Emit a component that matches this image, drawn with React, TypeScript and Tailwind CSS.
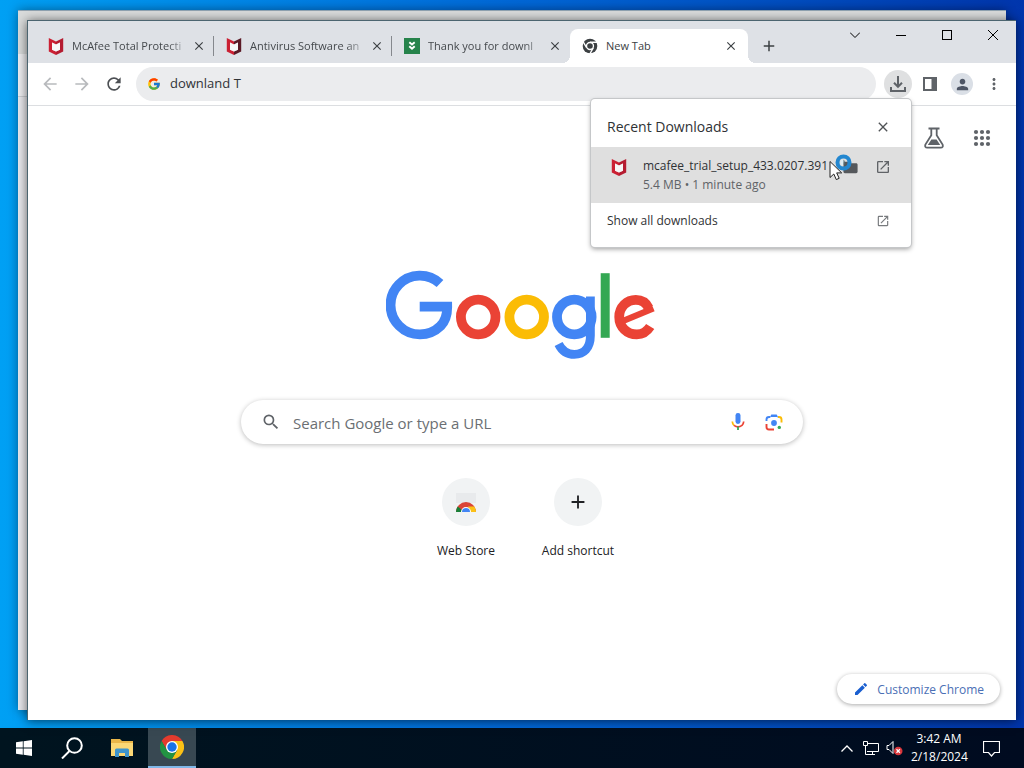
import React from "react";
import {
  MdAdd,
  MdArrowBack,
  MdArrowForward,
  MdClose,
  MdEdit,
  MdFolder,
  MdMoreVert,
  MdOpenInNew,
  MdPerson,
  MdRefresh,
  MdSearch,
} from "react-icons/md";
import { FcGoogle } from "react-icons/fc";

function McAfeeIcon({ dark = false }: { dark?: boolean }) {
  return (
    <svg viewBox="0 0 16 17" className="h-[17px] w-4 shrink-0" aria-hidden="true">
      <path d="M.8 0 8 3.400V6.400L4 4.500v7.200l4 1.900V17l-7.200-3.500z" fill="#cb2033" />
      <path d="M15.200 0 8 3.400V6.400l4-1.900v7.200l-4 1.900V17l7.200-3.500z" fill={dark ? "#5b1a26" : "#b51c31"} />
      <path d="M4 4.500l4 1.900 4-1.900v7.200l-4 1.900-4-1.900z" fill="#fff" fillOpacity="0.75" />
    </svg>
  );
}

function GreenChevronIcon() {
  return (
    <svg viewBox="0 0 16 16" className="size-4 shrink-0" aria-hidden="true">
      <rect width="16" height="16" fill="#26834b" />
      <path d="M5.300 4.200 8 6.500l2.700-2.300M5.300 8.200 8 10.800l2.700-2.600" fill="none" stroke="#fff" strokeWidth="1.900" />
    </svg>
  );
}

function ChromeGrayIcon() {
  return (
    <svg viewBox="0 0 24 24" className="size-4 shrink-0" aria-hidden="true">
      <circle cx="12" cy="12" r="11" fill="#3c4043" />
      <path d="M12 6.400h10.500M7.100 14.900 1.800 5.700M16.900 14.900l-5.300 9.200" stroke="#fff" strokeWidth="2" />
      <circle cx="12" cy="12" r="5.200" fill="#3c4043" stroke="#fff" strokeWidth="2" />
    </svg>
  );
}

function ChromeIcon() {
  return (
    <svg viewBox="0 0 24 24" className="size-6" aria-hidden="true">
      <path d="M1.600 6A12 12 0 0 1 22.400 6H12L6.800 15z" fill="#e33b2e" />
      <path d="M22.400 6A12 12 0 0 1 12 24l5.200-9L12 6z" fill="#fbc116" />
      <path d="M12 24A12 12 0 0 1 1.600 6l5.200 9h10.400z" fill="#229342" />
      <circle cx="12" cy="12" r="6" fill="#fff" />
      <circle cx="12" cy="12" r="4.700" fill="#1a73e8" />
    </svg>
  );
}

function GoogleLogo() {
  return (
    <svg viewBox="387 270 270 90" className="h-[90px] w-[270px]" role="img" aria-label="Google" fill="none">
      <path
        d="M441 283.500A29.400 29.400 0 1 0 441.500 326C446.500 320.800 448.300 314 448.200 306.600H420.700"
        stroke="#4285f4"
        strokeWidth="9.800"
      />
      <circle cx="479.200" cy="317" r="17.300" stroke="#ea4335" strokeWidth="9.800" />
      <circle cx="527.700" cy="317" r="17.300" stroke="#fbbc05" strokeWidth="9.800" />
      <circle cx="575.300" cy="317" r="17.300" stroke="#4285f4" strokeWidth="9.800" />
      <path
        d="M591.400 296.400V335.500C591.400 348.500 584.500 354.400 575.300 354.400C568 354.400 562.600 350.200 559.600 344"
        stroke="#4285f4"
        strokeWidth="8.800"
      />
      <path d="M606.200 273.200V337.800" stroke="#34a853" strokeWidth="9" />
      <path
        d="M651.200 326.500C648 331.600 643.400 334.400 637.800 334.400C628 334.400 620.200 327 620.200 317C620.200 307 627.800 299.800 636.800 299.800C643 299.800 647.400 303.200 649.600 307.800"
        stroke="#ea4335"
        strokeWidth="9.700"
      />
      <path d="M623 321.400 654.400 308.400" stroke="#ea4335" strokeWidth="6.400" />
    </svg>
  );
}

function DownloadIcon() {
  return (
    <svg viewBox="0 0 18 18" className="size-[18px]" fill="none" stroke="#5f6368" strokeWidth="2" aria-hidden="true">
      <path d="M9 1v10.500M5 7.800l4 4 4-4M2 12v4h14v-4" />
    </svg>
  );
}

function SidePanelIcon() {
  return (
    <svg viewBox="0 0 14 14" className="size-3.5" aria-hidden="true">
      <path d="M0 0h14v14H0zM2 2v10h6.500V2z" fill="#5f6368" fillRule="evenodd" />
    </svg>
  );
}

function FlaskIcon() {
  return (
    <svg viewBox="0 0 20 22" className="h-[22px] w-5" fill="none" stroke="#5f6368" strokeWidth="1.800" aria-hidden="true">
      <path d="M4.500 1.500h11M7.300 1.500v6.800L1.400 17.600Q.5 20.600 3.200 20.600h13.600q2.700 0 1.800-3L12.700 8.300V1.500" />
      <path d="M7.400 12.500h5.200l3.600 5.500H3.800z" fill="#5f6368" stroke="none" />
    </svg>
  );
}

function AppsIcon() {
  return (
    <svg viewBox="0 0 24 24" className="size-6" fill="#5f6368" aria-hidden="true">
      {[6, 12, 18].map((cy) =>
        [6, 12, 18].map((cx) => <circle key={cx + "-" + cy} cx={cx} cy={cy} r="2.100" />),
      )}
    </svg>
  );
}

function MicIcon() {
  return (
    <svg viewBox="0 0 14 18" className="h-[18px] w-3.5" fill="none" aria-hidden="true">
      <rect x="4.500" y="0" width="5" height="11" rx="2.400" fill="#4285f4" />
      <path d="M1.300 8.500q.1 2.400 1.700 3.900" stroke="#fbbc05" strokeWidth="1.700" />
      <path d="M3 12.400q4 3 8 0 1.600-1.500 1.700-3.900" stroke="#ea4335" strokeWidth="1.700" />
      <path d="M7 13.500V17" stroke="#34a853" strokeWidth="1.800" />
    </svg>
  );
}

function LensIcon() {
  return (
    <svg viewBox="0 0 18 18" className="size-[18px]" fill="none" strokeWidth="1.900" aria-hidden="true">
      <path d="M1.500 8V6.500q0-2.500 2.500-2.500h1" stroke="#4285f4" />
      <path d="M4.500 4.900 6.300 1.500h5.400l1.800 3.400-1.500-.9H6z" fill="#4285f4" />
      <path d="M13 4h1q2.500 0 2.500 2.500V9.500" stroke="#fbbc05" />
      <path d="M1.500 11V14q0 2.500 2.500 2.500h5" stroke="#ea4335" />
      <circle cx="9" cy="10" r="2.900" fill="#4285f4" />
      <circle cx="14.300" cy="14.400" r="1.700" fill="#34a853" />
    </svg>
  );
}

function WebStoreIcon() {
  return (
    <svg viewBox="0 0 24 24" className="size-6" aria-hidden="true">
      <path d="M2 3h20v10H2z" fill="#e8eaec" />
      <path d="M2 22a10 10 0 0 1 20 0z" fill="#db4437" />
      <path d="M2 22a10 10 0 0 1 1.700-5.500L8 20v2z" fill="#188038" />
      <path d="M22 22a10 10 0 0 0-1.700-5.500H14l2 5.500z" fill="#fbc116" />
      <path d="M7 22a5 5 0 0 1 10 0z" fill="#fff" />
      <path d="M8 22a4 4 0 0 1 8 0z" fill="#4285f4" />
    </svg>
  );
}

function PointerBusy() {
  return (
    <svg viewBox="0 0 26 30" className="absolute top-[54px] left-[237px] h-[30px] w-[26px]" aria-hidden="true">
      <circle cx="15.500" cy="9.500" r="6" fill="none" stroke="#2387d0" strokeWidth="4" />
      <path d="M12.500 9.500a3 3 0 0 1 3-3v6a3 3 0 0 1-3-3z" fill="#dcebf3" />
      <path d="M15.500 6.500a4 4 0 0 1 0 6z" fill="#55707a" />
      <path d="M2 8.500v16l3.800-3.500 2.500 5.600 2.900-1.300-2.500-5.400h5z" fill="#fff" stroke="#222" strokeWidth="1" />
    </svg>
  );
}

const tabs = [
  { title: "McAfee Total Protecti", icon: <McAfeeIcon /> },
  { title: "Antivirus Software an", icon: <McAfeeIcon dark /> },
  { title: "Thank you for downl", icon: <GreenChevronIcon /> },
];

function TitleBar() {
  return (
    <header className="flex h-[42px] items-end bg-[#dee1e6] pl-2">
      <div className="flex min-w-0" role="tablist">
        {tabs.map((tab, i) => (
          <div
            key={tab.title}
            role="tab"
            aria-selected="false"
            className="flex h-[34px] w-[178px] items-center pl-3"
          >
            {tab.icon}
            <span className="ml-2 w-[120px] text-[11px] whitespace-nowrap text-[#45494d] [mask-image:linear-gradient(to_right,black_80%,#0003_94%)]">
              {tab.title}
            </span>
            <button aria-label={"Close " + tab.title} className="text-[#3c4043]">
              <MdClose size={14} />
            </button>
            {i < 2 && <span className="ml-auto h-5 w-px bg-[#85888d]" />}
          </div>
        ))}
        <div
          role="tab"
          aria-selected="true"
          className="relative flex h-[34px] w-[178px] items-center rounded-t-lg bg-white pl-3 before:absolute before:bottom-0 before:-left-2 before:size-2 before:bg-[radial-gradient(circle_at_0_0,transparent_8px,white_8px)] after:absolute after:-right-2 after:bottom-0 after:size-2 after:bg-[radial-gradient(circle_at_100%_0,transparent_8px,white_8px)]"
        >
          <ChromeGrayIcon />
          <span className="ml-2 w-[118px] text-[11px] text-[#3c4043]">New Tab</span>
          <button aria-label="Close New Tab" className="text-[#3c4043]">
            <MdClose size={14} />
          </button>
        </div>
      </div>
      <button aria-label="New tab" className="mb-2 ml-3 text-[#3c4043]">
        <MdAdd size={18} />
      </button>
      <div className="ml-auto flex self-start text-black">
        <button aria-label="Search tabs" className="flex h-7 w-[46px] items-center justify-center">
          <svg viewBox="0 0 10 6" className="h-1.5 w-2.5" fill="none" stroke="currentColor">
            <path d="m0 .5 5 5 5-5" />
          </svg>
        </button>
        <button aria-label="Minimize" className="flex h-7 w-[46px] items-center justify-center">
          <span className="h-px w-2.5 bg-black" />
        </button>
        <button aria-label="Maximize" className="flex h-7 w-[46px] items-center justify-center">
          <span className="size-2.5 border border-black" />
        </button>
        <button aria-label="Close window" className="flex h-7 w-[46px] items-center justify-center">
          <svg viewBox="0 0 10 10" className="size-2.5" fill="none" stroke="currentColor">
            <path d="m0 0 10 10M10 0 0 10" />
          </svg>
        </button>
      </div>
    </header>
  );
}

function Toolbar() {
  return (
    <div className="flex h-[43px] items-center border-b border-[#dcdee1] pr-[13px] pl-3 text-[#5f6368]">
      <button aria-label="Back" className="text-[#b8babd]">
        <MdArrowBack size={20} />
      </button>
      <button aria-label="Forward" className="ml-3 text-[#b8babd]">
        <MdArrowForward size={20} />
      </button>
      <button aria-label="Reload" className="ml-3 text-[#4d5054]">
        <MdRefresh size={20} />
      </button>
      <div className="ml-3 flex h-[34px] flex-1 items-center rounded-full bg-[#ebecee] pl-[11px]">
        <FcGoogle size={14} />
        <input
          aria-label="Address"
          defaultValue="downland T"
          className="ml-[9px] flex-1 bg-transparent text-[13px] text-[#303337] outline-none"
        />
      </div>
      <div className="ml-2 flex items-center">
        <button aria-label="Downloads" className="flex size-7 items-center justify-center rounded-full bg-[#dfe0e1]">
          <DownloadIcon />
        </button>
        <button aria-label="Side panel" className="ml-[11px]">
          <SidePanelIcon />
        </button>
        <button
          aria-label="Profile"
          className="ml-3.5 flex size-[22px] items-center justify-center rounded-full bg-[#dadfe6]"
        >
          <MdPerson size={17} color="#4d5565" />
        </button>
        <button aria-label="Menu" className="ml-3">
          <MdMoreVert size={18} />
        </button>
      </div>
    </div>
  );
}

function DownloadBubble() {
  return (
    <section
      aria-label="Recent Downloads"
      className="absolute top-[78px] right-[105px] h-[148px] w-80 rounded-[4px] bg-white text-[#2f3235] shadow-[0_0_0_1px_#c5c7c9,0_2px_5px_#0006]"
    >
      <div className="flex h-12 items-center justify-between pt-2 pr-5 pl-4">
        <h2 className="text-sm">Recent Downloads</h2>
        <button aria-label="Close downloads" className="text-[#505356]">
          <MdClose size={16} />
        </button>
      </div>
      <div className="flex h-14 items-center bg-[#dfdfdf] pr-5 pl-5">
        <div className="-mt-4">
          <McAfeeIcon />
        </div>
        <div className="ml-4 min-w-0 flex-1">
          <p className="h-[19px] text-xs leading-[18px] whitespace-nowrap">mcafee_trial_setup_433.0207.391</p>
          <p className="text-xs leading-[18px] text-[#606367]">5.4 MB • 1 minute ago</p>
        </div>
        <button aria-label="Show in folder" className="-mt-4 text-[#55585c]">
          <MdFolder size={17} />
        </button>
        <button aria-label="Open file" className="-mt-4 ml-4 text-[#606367]">
          <MdOpenInNew size={16} />
        </button>
      </div>
      <a href="#downloads" className="flex h-9 items-center justify-between pr-[21px] pl-4 text-xs">
        Show all downloads
        <MdOpenInNew size={14} color="#777a7d" />
      </a>
      <PointerBusy />
    </section>
  );
}

function NewTabPage() {
  return (
    <main className="relative flex flex-1 flex-col items-center bg-white">
      <div className="flex h-16 w-full items-center justify-end gap-[26px] pr-[22px] text-[#5f6368]">
        <button aria-label="Labs">
          <FlaskIcon />
        </button>
        <button aria-label="Google apps">
          <AppsIcon />
        </button>
      </div>
      <div className="mt-[100px] pr-0.5">
        <GoogleLogo />
      </div>
      <div className="mt-10 flex h-11 w-[562px] max-w-full items-center rounded-full bg-white px-5 shadow-[0_1px_5px_#0004]">
        <MdSearch size={20} color="#5f6368" />
        <input
          aria-label="Search Google or type a URL"
          placeholder="Search Google or type a URL"
          className="ml-3 min-w-0 flex-1 bg-transparent pt-0.5 text-[15px] text-[#303337] outline-none placeholder:text-[#6b6f73]"
        />
        <button aria-label="Search by voice">
          <MicIcon />
        </button>
        <button aria-label="Search by image" className="ml-5">
          <LensIcon />
        </button>
      </div>
      <div className="mt-[34px] flex text-[#202124]">
        <a href="#store" className="flex w-28 flex-col items-center">
          <span className="flex size-12 items-center justify-center rounded-full bg-[#f1f3f4]">
            <WebStoreIcon />
          </span>
          <span className="mt-[17px] leading-4">Web Store</span>
        </a>
        <button className="flex w-28 flex-col items-center">
          <span className="flex size-12 items-center justify-center rounded-full bg-[#f1f3f4]">
            <MdAdd size={22} />
          </span>
          <span className="mt-[17px] leading-4">Add shortcut</span>
        </button>
      </div>
      <button className="absolute right-4 bottom-4 flex h-[30px] items-center gap-2 rounded-full bg-white px-4 text-xs text-[#4a6fb5] shadow-[0_1px_4px_#0005]">
        <MdEdit size={16} color="#1a5fd0" />
        <span className="pt-0.5">Customize Chrome</span>
      </button>
    </main>
  );
}

function Taskbar() {
  return (
    <footer className="flex h-10 items-center bg-linear-to-r from-[#00141f] to-[#000b20] text-white">
      <button aria-label="Start" className="flex h-full w-12 items-center justify-center">
        <svg viewBox="0 0 16 16" className="size-4" fill="#fff">
          <path d="M0 2.300 6.800 1.300v6.200H0zM7.600 1.200 16 0v7.500H7.600zM0 8.400h6.800v6.300L0 13.700zM7.600 8.400H16V16l-8.400-1.200z" />
        </svg>
      </button>
      <button aria-label="Search" className="flex h-full w-12 items-center justify-center">
        <svg viewBox="0 0 22 22" className="size-[22px]" fill="none" stroke="#fff" strokeWidth="2">
          <circle cx="13.500" cy="8.500" r="7.300" />
          <path d="m8.500 14-7.500 7.500" />
        </svg>
      </button>
      <button aria-label="File Explorer" className="flex h-full w-[52px] items-center justify-center">
        <svg viewBox="0 0 22 18" className="h-[18px] w-[22px]">
          <path d="M0 0h9l2 2h11v15H0z" fill="#eab649" />
          <path d="M0 4h22v13H0z" fill="#fbd775" />
          <path d="M4 18v-7q0-1.500 1.500-1.500h11q1.500 0 1.500 1.500v7h-4v-4H8v4z" fill="#3e94cc" />
        </svg>
      </button>
      <button
        aria-label="Google Chrome"
        className="flex h-full w-12 items-center justify-center border-b-2 border-[#80b8e8] bg-[#384852]"
      >
        <ChromeIcon />
      </button>
      <div className="ml-auto flex h-full items-center">
        <button aria-label="Show hidden icons">
          <svg viewBox="0 0 12 7" className="h-[7px] w-3" fill="none" stroke="#fff" strokeWidth="1.300">
            <path d="m.5 6.500 5.500-5.500 5.500 5.500" />
          </svg>
        </button>
        <button aria-label="Network" className="ml-2.5">
          <svg viewBox="0 0 16 14" className="h-3.5 w-4" fill="none" stroke="#fff">
            <path d="M5 2.500h10.500v8H4M4 13.500h8M9.500 10.500v3M.5.500h4v4h-4zM2.500 4.500v9H4" />
          </svg>
        </button>
        <button aria-label="Volume muted" className="ml-[7px]">
          <svg viewBox="0 0 17 16" className="h-4 w-[17px]" fill="none">
            <path d="M1 5.500h2l4-4v12l-4-4H1z" stroke="#fff" />
            <circle cx="12.200" cy="11" r="4.300" fill="#d9363b" />
            <path d="m10.500 9.300 3.400 3.400M13.900 9.300l-3.400 3.400" stroke="#fff" strokeWidth="1.300" />
          </svg>
        </button>
        <div className="ml-2 w-14 text-center leading-[18px] whitespace-nowrap">
          <p>3:42 AM</p>
          <p>2/18/2024</p>
        </div>
        <button aria-label="Notifications" className="mr-6 ml-4">
          <svg viewBox="0 0 17 17" className="size-[17px]" fill="none" stroke="#fff" strokeWidth="1.200">
            <path d="M.5 1.500h16v11h-5L8.500 16l-3-3.500h-5z" />
          </svg>
        </button>
      </div>
    </footer>
  );
}

export default function App() {
  return (
    <div className="flex min-h-screen flex-col bg-linear-to-r from-[#00a0f4] via-[#0068d8] to-[#0035ac] font-['Open_Sans','Noto_Sans',sans-serif] text-xs">
      <div className="relative flex flex-1 flex-col pt-5 pr-2 pb-2 pl-[27px]">
        <div className="absolute top-2.5 right-[18px] bottom-[18px] left-[18px] border-t border-[#8fa2b0] bg-[#e9e9ed] shadow-[0_0_10px_#0006]">
          <div className="h-[43px] bg-[#d9dbdb]" />
          <div className="h-[43px] border-b border-[#ccced2] bg-[#eeeef1]" />
        </div>
        <div className="relative flex flex-1 flex-col border-t border-l border-[#4c6570] bg-white shadow-[0_1px_10px_#0009]">
          <TitleBar />
          <Toolbar />
          <NewTabPage />
          <DownloadBubble />
        </div>
      </div>
      <Taskbar />
    </div>
  );
}
